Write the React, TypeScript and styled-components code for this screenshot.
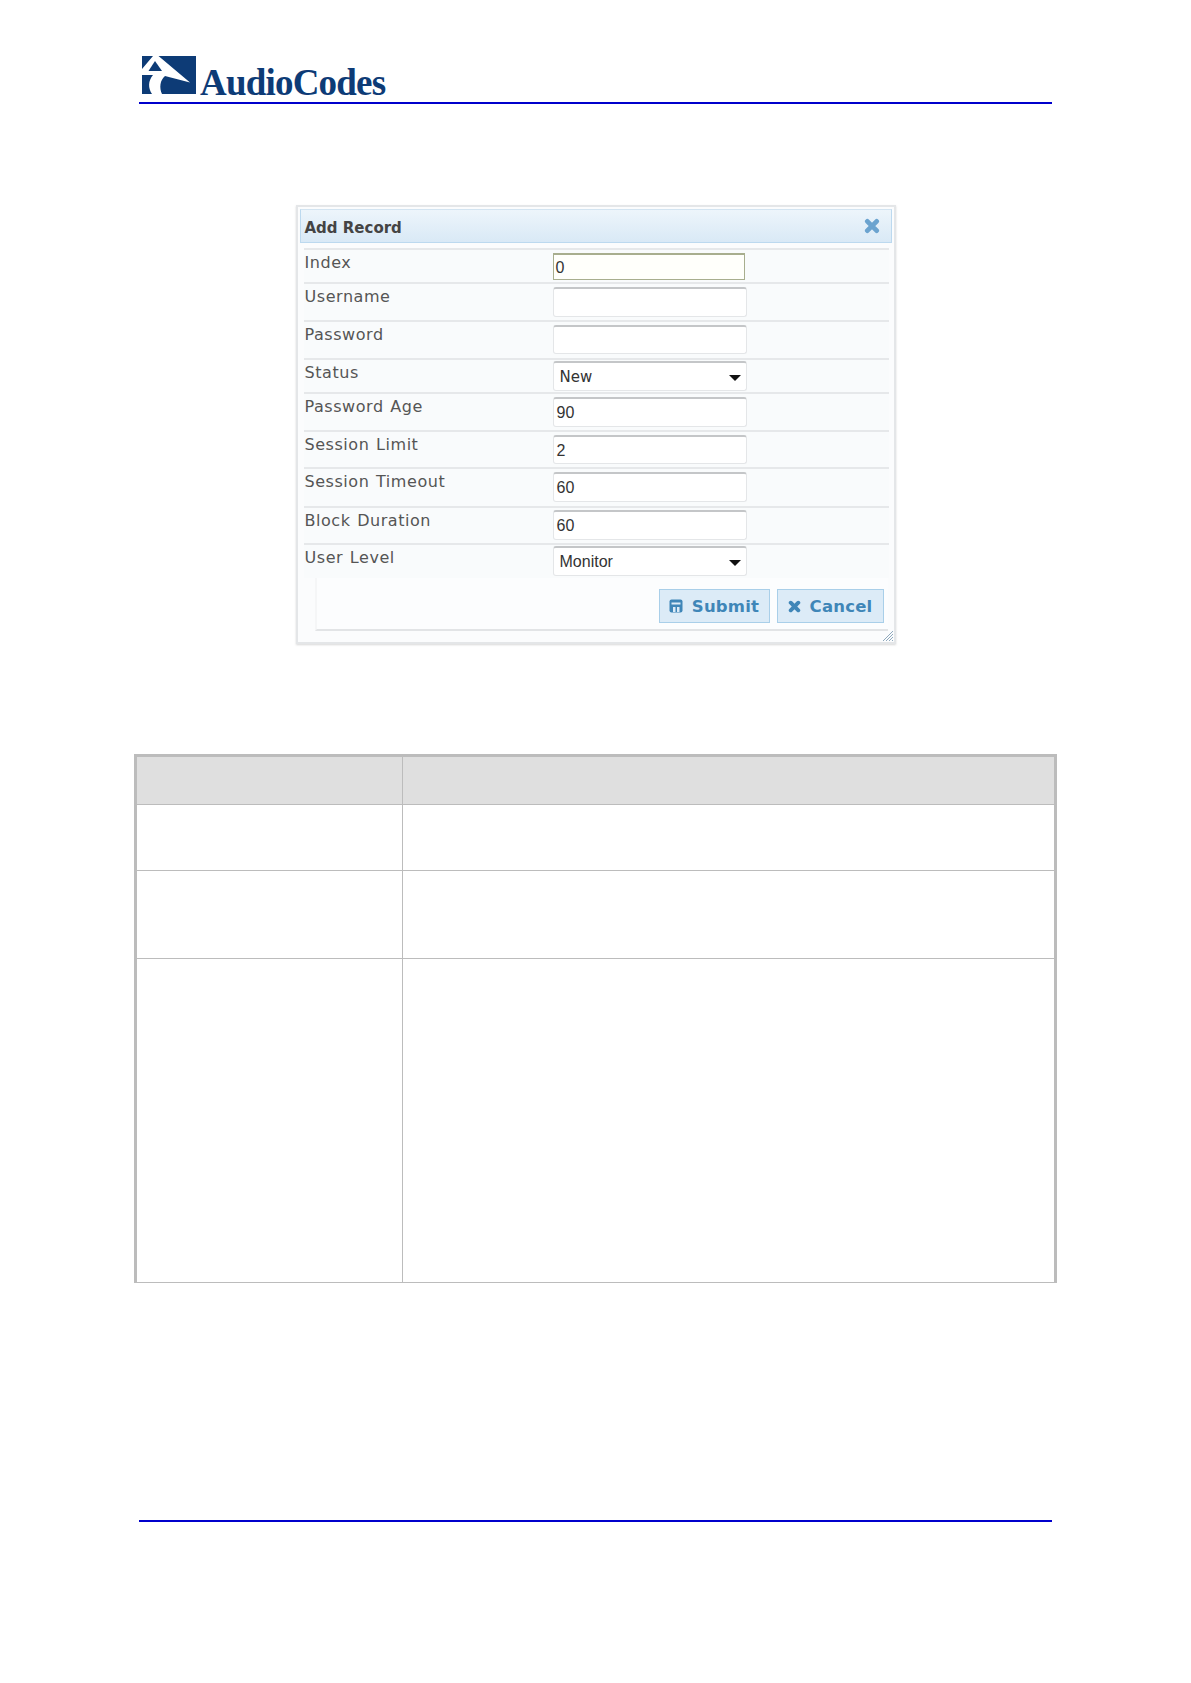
import styled, {createGlobalStyle} from 'styled-components';

const GlobalStyle = createGlobalStyle`
	html, body {
		margin: 0;
		padding: 0;
		background: #fff;
	}
`;

const fields = [
	{label: 'Index', value: '0', height: 34, top: 3, boxHeight: 27, focused: true},
	{label: 'Username', value: '', height: 38, top: 3, boxHeight: 30},
	{label: 'Password', value: '', height: 38, top: 3, boxHeight: 29},
	{label: 'Status', value: 'New', height: 34, top: 1, boxHeight: 30, select: true},
	{label: 'Password Age', value: '90', height: 38, top: 3, boxHeight: 30},
	{label: 'Session Limit', value: '2', height: 37, top: 3, boxHeight: 29},
	{label: 'Session Timeout', value: '60', height: 39, top: 3, boxHeight: 30},
	{label: 'Block Duration', value: '60', height: 37, top: 2, boxHeight: 30},
	{label: 'User Level', value: 'Monitor', height: 35, top: 1, boxHeight: 30, select: true, narrow: true},
];

const LogoMark = () => (
	<StyledMark viewBox='0 0 54 38'>
		<rect width='54' height='38' fill='#0d3b76' />
		<path
			fill='#fff'
			d='M11 0 L16.5 0 L48 26.5 L23 20 C18 24 17 32 20 38 L10 38 C6 32 6 25 11 19 L0 19 L0 13 Z'
		/>
		<path fill='#0d3b76' d='M13 5 L6.5 15 L20 15 Z' />
	</StyledMark>
);

const SaveIcon = () => (
	<svg width='14' height='14' viewBox='0 0 14 14'>
		<path
			fill='#3f86b8'
			d='M2.5 0.5 H11.5 Q13.5 0.5 13.5 2.5 V11.5 Q13.5 13.5 11.5 13.5 H2.5 Q0.5 13.5 0.5 11.5 V2.5 Q0.5 0.5 2.5 0.5 Z'
		/>
		<rect x='2.5' y='3.5' width='9' height='2' fill='#dcebf7' />
		<rect x='4' y='8' width='2.5' height='5' fill='#dcebf7' />
		<rect x='8' y='8' width='2.5' height='5' fill='#dcebf7' />
	</svg>
);

const CrossIcon = ({size, color}: {size: number; color: string}) => (
	<svg width={size} height={size} viewBox='0 0 12 12'>
		<path d='M2.5 2.5 L9.5 9.5 M9.5 2.5 L2.5 9.5' stroke={color} strokeWidth='3.6' strokeLinecap='round' />
	</svg>
);

const App = () => (
	<StyledPage>
		<GlobalStyle />
		<StyledHeader>
			<LogoMark />
			<StyledBrand>AudioCodes</StyledBrand>
		</StyledHeader>

		<StyledDialog>
			<StyledTitle>
				<span>Add Record</span>
				<CrossIcon size={16} color='#6ba3cf' />
			</StyledTitle>
			<StyledRows>
				{fields.map((field) => (
					<StyledRow key={field.label} $height={field.height}>
						<StyledLabel>{field.label}</StyledLabel>
						<StyledField
							$top={field.top}
							$height={field.boxHeight}
							$focused={!!field.focused}
							$select={!!field.select}
							$narrow={!!field.narrow}
						>
							{field.value}
							{field.select && <StyledArrow />}
						</StyledField>
					</StyledRow>
				))}
			</StyledRows>
			<StyledActions>
				<StyledButton $width={111}>
					<SaveIcon />
					Submit
				</StyledButton>
				<StyledButton $width={107}>
					<CrossIcon size={13} color='#3f86b8' />
					Cancel
				</StyledButton>
			</StyledActions>
			<StyledGrip viewBox='0 0 12 12'>
				<path d='M1 11 L11 1 M4 11 L11 4 M7 11 L11 7 M10 11 L11 10' stroke='#8fa9bd' strokeWidth='1' />
			</StyledGrip>
		</StyledDialog>

		<StyledTable>
			<colgroup>
				<col width='267' />
				<col />
			</colgroup>
			<thead>
				<tr>
					<StyledHeadCell />
					<StyledHeadCell />
				</tr>
			</thead>
			<tbody>
				<StyledBodyRow $height={66}>
					<StyledCell />
					<StyledCell />
				</StyledBodyRow>
				<StyledBodyRow $height={88}>
					<StyledCell />
					<StyledCell />
				</StyledBodyRow>
				<StyledBodyRow $height={324}>
					<StyledCell />
					<StyledCell />
				</StyledBodyRow>
			</tbody>
		</StyledTable>

		<StyledFooterRule />
	</StyledPage>
);

export default App;

const StyledPage = styled.div`
	display: flex;
	flex-direction: column;
	box-sizing: border-box;
	width: 1191px;
	height: 1683px;
	padding: 0 134px;
	background: #fff;
	font-family: 'DejaVu Sans', Verdana, sans-serif;
`;

const StyledHeader = styled.header`
	display: flex;
	align-items: flex-end;
	box-sizing: border-box;
	height: 104px;
	margin: 0 5px;
	padding: 56px 0 7px 3px;
	border-bottom: 2px solid #0000cc;
`;

const StyledMark = styled.svg`
	display: block;
	flex: none;
	width: 54px;
	height: 38px;
	margin-bottom: 1px;
`;

const StyledBrand = styled.span`
	margin-left: 4px;
	font-family: 'Liberation Serif', serif;
	font-size: 37px;
	font-weight: 700;
	line-height: 25px;
	letter-spacing: -0.8px;
	color: #0d3b76;
`;

const StyledDialog = styled.section`
	position: relative;
	box-sizing: border-box;
	align-self: center;
	width: 600px;
	height: 439px;
	margin-top: 101px;
	padding: 2px;
	border: 2px solid #e4e6e8;
	background: #fbfcfd;
	box-shadow: 0 1px 2px #d8d8d8;
`;

const StyledTitle = styled.div`
	display: flex;
	align-items: center;
	justify-content: space-between;
	box-sizing: border-box;
	height: 34px;
	padding: 3px 11px 0 4px;
	border: 1px solid #bcd9ef;
	border-top-color: #d3e4f1;
	background: linear-gradient(#edf5fb, #d9e9f6);
	font-size: 15px;
	font-weight: 700;
	color: #444;

	svg {
		margin-top: -3px;
	}
`;

const StyledRows = styled.div`
	display: flex;
	flex-direction: column;
	margin: 5px 3px 0 4px;
`;

const StyledRow = styled.div<{$height: number}>`
	display: flex;
	align-items: flex-start;
	box-sizing: border-box;
	height: ${(p) => p.$height}px;
	border-top: 2px solid #e6e8ea;
	background: #f9fbfc;
`;

const StyledLabel = styled.div`
	flex: none;
	width: 249px;
	padding-left: 1px;
	box-sizing: border-box;
	font-size: 16px;
	line-height: 26px;
	letter-spacing: 0.55px;
	word-spacing: 1px;
	color: #555;
`;

const StyledField = styled.div<{$top: number; $height: number; $focused: boolean; $select: boolean; $narrow: boolean}>`
	position: relative;
	display: flex;
	align-items: center;
	box-sizing: border-box;
	width: ${(p) => (p.$focused ? 192 : 194)}px;
	height: ${(p) => p.$height}px;
	margin-top: ${(p) => p.$top}px;
	padding: 1px 0 0 ${(p) => (p.$select ? 6 : p.$focused ? 2 : 3)}px;
	border: 1px solid ${(p) => (p.$focused ? '#a8ae8e' : '#e4e6e8')};
	border-top: 2px solid ${(p) => (p.$focused ? '#a8ae8e' : '#c4c6c8')};
	border-radius: ${(p) => (p.$focused ? 0 : 3)}px;
	background: ${(p) => (p.$focused ? '#fffffb' : '#fff')};
	font-family: ${(p) => (p.$select && !p.$narrow ? "'DejaVu Sans'" : "'Liberation Sans'")}, sans-serif;
	font-size: ${(p) => (p.$select && !p.$narrow ? 15 : 16)}px;
	color: #333;
`;

const StyledArrow = styled.span`
	position: absolute;
	top: 12px;
	right: 5px;
	border-top: 6px solid #111;
	border-left: 6px solid transparent;
	border-right: 6px solid transparent;
`;

const StyledActions = styled.div`
	display: flex;
	justify-content: flex-end;
	gap: 7px;
	box-sizing: border-box;
	height: 53px;
	margin: 0 4px 0 15px;
	padding: 11px 4px 0 0;
	border-bottom: 2px solid #e2e4e6;
	border-left: 2px solid #f5f6f7;
	background: #fcfdfe;
`;

const StyledButton = styled.div<{$width: number}>`
	display: flex;
	align-items: center;
	justify-content: center;
	gap: 9px;
	box-sizing: border-box;
	width: ${(p) => p.$width}px;
	height: 34px;
	border: 1px solid #a9cfe9;
	background: #dcebf7;
	font-size: 16.5px;
	font-weight: 700;
	letter-spacing: 0.2px;
	color: #3f86b8;
`;

const StyledGrip = styled.svg`
	position: absolute;
	right: 0;
	bottom: 0;
	width: 12px;
	height: 12px;
`;

const StyledTable = styled.table`
	width: 923px;
	margin-top: 110px;
	table-layout: fixed;
	border-collapse: collapse;
	border-top: 3px solid #bcbcbc;
	border-left: 3px solid #bcbcbc;
	border-right: 3px solid #bcbcbc;
	border-bottom: 1px solid #bcbcbc;
`;

const StyledHeadCell = styled.th`
	height: 47px;
	padding: 0;
	border-right: 1px solid #bcbcbc;
	border-bottom: 1px solid #bcbcbc;
	background: #dfdfdf;
`;

const StyledBodyRow = styled.tr<{$height: number}>`
	height: ${(p) => p.$height}px;
`;

const StyledCell = styled.td`
	padding: 0;
	border-right: 1px solid #bcbcbc;
	border-bottom: 1px solid #bcbcbc;
`;

const StyledFooterRule = styled.div`
	height: 2px;
	margin: 237px 5px 0;
	background: #0000cc;
`;
